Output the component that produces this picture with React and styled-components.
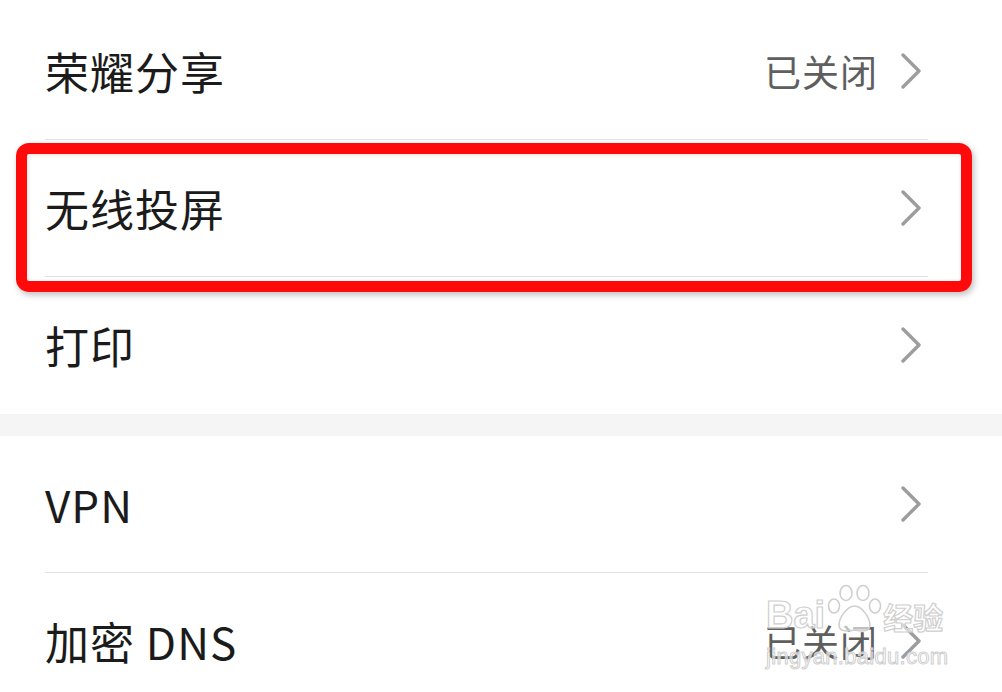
import React from "react";
import styled, { createGlobalStyle } from "styled-components";

const GlobalStyle = createGlobalStyle`
  html, body {
    margin: 0;
    padding: 0;
    background: #ffffff;
    overflow: hidden;
  }
  body {
    font-family: "Noto Sans CJK SC", "Noto Sans", sans-serif;
  }
`;

const Page = styled.div`
  width: 1002px;
  height: 692px;
  position: relative;
  overflow: hidden;
  padding-top: 3px;
  box-sizing: border-box;
`;

const Section = styled.div`
  padding: 0 74px 0 45px;
`;

const Gap = styled.div`
  height: 22px;
  background: #f5f5f5;
`;

const Row = styled.div`
  position: relative;
  display: flex;
  align-items: center;
  justify-content: space-between;
  height: 136px;
  padding-right: 6px;
  border-bottom: 1px solid ${(p) => (p.$last ? "transparent" : "#e3e3e3")};
`;

const Label = styled.div`
  font-size: 44px;
  color: #1b1b1b;
  letter-spacing: 1px;
  line-height: 1;
`;

const Right = styled.div`
  display: flex;
  align-items: center;
  gap: 22px;
`;

const Status = styled.span`
  font-size: 37px;
  color: #5f5f5f;
  letter-spacing: 1px;
  line-height: 1;
`;

const Highlight = styled.div`
  position: absolute;
  left: -29px;
  right: -44px;
  top: 3px;
  bottom: -16px;
  border: 11px solid #ff0a0a;
  border-radius: 13px;
  box-shadow: 2px 3px 6px rgba(0, 0, 0, 0.25), inset 1px 1px 4px rgba(0, 0, 0, 0.12);
  pointer-events: none;
`;

const Watermark = styled.div`
  position: absolute;
  left: 766px;
  top: 582px;
  width: 190px;
  pointer-events: none;
  font-family: "Liberation Sans", "Noto Sans CJK SC", sans-serif;
`;

const MarkTop = styled.div`
  display: flex;
  align-items: flex-end;
  height: 52px;
`;

const MarkText = styled.span`
  font-size: ${(p) => p.$size}px;
  font-weight: bold;
  line-height: 1;
  color: rgba(255, 255, 255, 0.6);
  -webkit-text-stroke: 1.2px #cfcfcf;
  margin-left: ${(p) => p.$ml || 0}px;
`;

const MarkUrl = styled.div`
  font-size: 22px;
  line-height: 1;
  margin-top: 12px;
  color: rgba(255, 255, 255, 0.6);
  -webkit-text-stroke: 1px #cfcfcf;
  letter-spacing: 0.3px;
`;

const Chevron = () => (
  <svg width="22" height="36" viewBox="0 0 22 36">
    <path
      d="M3 2 L19 18 L3 34"
      fill="none"
      stroke="#9d9d9d"
      strokeWidth="3.4"
      strokeLinecap="round"
      strokeLinejoin="round"
    />
  </svg>
);

const Paw = () => (
  <svg width="56" height="50" viewBox="0 0 56 50" style={{ marginLeft: 2, marginRight: -4 }}>
    <g fill="rgba(255,255,255,0.6)" stroke="#cfcfcf" strokeWidth="1.6">
      <ellipse cx="19" cy="9" rx="6" ry="7.5" />
      <ellipse cx="36" cy="9" rx="6" ry="7.5" />
      <ellipse cx="7" cy="22" rx="5.5" ry="7" />
      <ellipse cx="48" cy="22" rx="5.5" ry="7" />
      <path d="M27.5 22 C20 22 12 34 12 41 C12 47 18 48 27.5 46 C37 48 43 47 43 41 C43 34 35 22 27.5 22 Z" />
    </g>
  </svg>
);

const Item = ({ label, status, last, highlighted }) => (
  <Row $last={last}>
    <Label>{label}</Label>
    <Right>
      {status && <Status>{status}</Status>}
      <Chevron />
    </Right>
    {highlighted && <Highlight />}
  </Row>
);

export default function App() {
  return (
    <Page>
      <GlobalStyle />
      <Section>
        <Item label="荣耀分享" status="已关闭" />
        <Item label="无线投屏" highlighted />
        <Item label="打印" last />
      </Section>
      <Gap />
      <Section>
        <Item label="VPN" />
        <Item label="加密 DNS" status="已关闭" last />
      </Section>
      <Watermark>
        <MarkTop>
          <MarkText $size={38}>Bai</MarkText>
          <Paw />
          <MarkText $size={30} $ml={4}>经验</MarkText>
        </MarkTop>
        <MarkUrl>jingyan.baidu.com</MarkUrl>
      </Watermark>
    </Page>
  );
}
